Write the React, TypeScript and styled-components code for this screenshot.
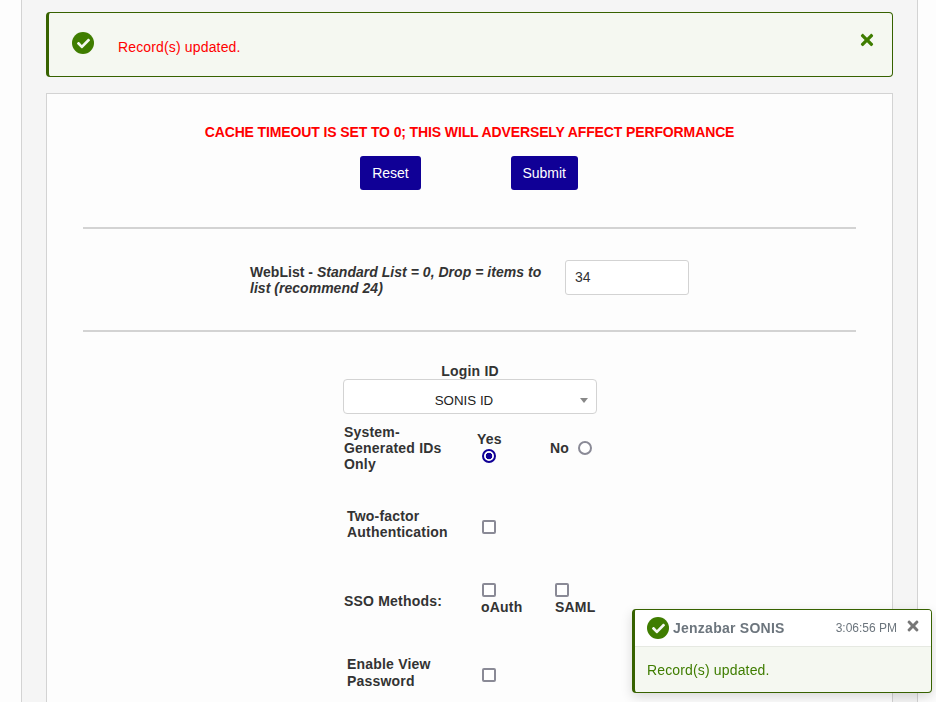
import { FaCheck, FaTimes } from "react-icons/fa"
import styled, { createGlobalStyle } from "styled-components"

const GlobalStyle = createGlobalStyle`
  html, body {
    margin: 0;
    padding: 0;
    height: 702px;
    overflow: hidden;
    background: #fdfdfd;
    font-family: "Liberation Sans", Arial, sans-serif;
    color: #333;
  }
`

const Shell = styled.div`
  box-sizing: border-box;
  width: 897px;
  height: 702px;
  margin-left: 21px;
  padding: 12px 24px 0;
  background: #f5f5f5;
  border-left: 1px solid #d3d3d3;
  border-right: 1px solid #d3d3d3;
  overflow: hidden;
`

const Alert = styled.div`
  box-sizing: border-box;
  display: flex;
  align-items: flex-start;
  height: 65px;
  padding: 19px 19px 0 23px;
  background: #f5f8f1;
  border: 1px solid #376200;
  border-left-width: 3px;
  border-radius: 4px;
`

const AlertText = styled.div`
  margin: 7px 0 0 24px;
  flex: 1;
  font-size: 14px;
  line-height: 16px;
  letter-spacing: 0.15px;
  color: #f00;
`

const CheckBadge = styled.span<{ $size: number }>`
  display: inline-flex;
  flex: none;
  align-items: center;
  justify-content: center;
  width: ${(p) => p.$size}px;
  height: ${(p) => p.$size}px;
  border-radius: 50%;
  background: #3f7d00;
  color: #f5f8f1;
  font-size: ${(p) => Math.round(p.$size * 0.6)}px;
`

const AlertClose = styled.span`
  display: flex;
  margin: -1px -3px 0 0;
  color: #3f7d00;
  font-size: 18px;
`

const Card = styled.div`
  box-sizing: border-box;
  height: 640px;
  margin-top: 16px;
  padding: 30px 36px 0;
  background: #fdfdfd;
  border: 1px solid #d3d3d3;
`

const Warning = styled.div`
  font-size: 14px;
  line-height: 16px;
  font-weight: 700;
  letter-spacing: -0.12px;
  text-align: center;
  color: #f00;
`

const ButtonRow = styled.div`
  display: flex;
  gap: 90px;
  justify-content: center;
  margin: 16px 0 0 -1px;
`

const ActionButton = styled.button`
  box-sizing: border-box;
  height: 34px;
  padding: 0 12px;
  background: #100096;
  border: none;
  border-radius: 3px;
  font-family: inherit;
  font-size: 14px;
  letter-spacing: -0.05px;
  color: #fff;
`

const Divider = styled.hr`
  height: 2px;
  margin: 0;
  background: #d3d3d3;
  border: none;
`

const TopDivider = styled(Divider)`
  margin-top: 37px;
`

const WebListRow = styled.div`
  display: flex;
  align-items: center;
  height: 101px;
  padding-left: 167px;
`

const BoldLabel = styled.div`
  font-size: 14px;
  line-height: 16px;
  font-weight: 700;
  letter-spacing: 0.2px;
  color: #333;
`

const WebListLabel = styled(BoldLabel)`
  width: 315px;
  letter-spacing: 0.03px;
  padding-right: 20px;
  box-sizing: border-box;

  em {
    font-style: italic;
  }
`

const TextInput = styled.input`
  box-sizing: border-box;
  width: 124px;
  height: 35px;
  margin-bottom: 5px;
  padding: 0 9px;
  background: #fff;
  border: 1px solid #d3d3d3;
  border-radius: 3px;
  font-family: inherit;
  font-size: 14px;
  color: #333;
`

const FormColumn = styled.div`
  width: 254px;
  margin-left: 260px;
`

const LoginLabel = styled(BoldLabel)`
  margin-top: 31px;
  text-align: center;
`

const SelectBox = styled.div`
  box-sizing: border-box;
  position: relative;
  height: 35px;
  padding: 13px 12px 0 0;
  background: #fff;
  border: 1px solid #d3d3d3;
  border-radius: 4px;
  font-size: 13.33px;
  line-height: 16px;
  text-align: center;
  color: #222;

  &::after {
    content: "";
    position: absolute;
    right: 8px;
    top: 18px;
    border-left: 4px solid transparent;
    border-right: 4px solid transparent;
    border-top: 5px solid #888;
  }
`

const OptionRow = styled.div<{ $height: number; $top: number }>`
  display: flex;
  align-items: center;
  height: ${(p) => p.$height}px;
  margin-top: ${(p) => p.$top}px;
`

const RowLabel = styled(BoldLabel)<{ $width: number; $indent: number; $leading?: number }>`
  box-sizing: border-box;
  flex: none;
  width: ${(p) => p.$width}px;
  padding-left: ${(p) => p.$indent}px;
  line-height: ${(p) => p.$leading ?? 16}px;
`

const Choice = styled.div<{ $width: number; $lift: number; $gap: number }>`
  display: flex;
  flex-direction: column;
  align-items: flex-start;
  gap: ${(p) => p.$gap}px;
  width: ${(p) => p.$width}px;
  margin-bottom: ${(p) => p.$lift}px;
`

const Box = styled.span<{ $x?: number; $y?: number }>`
  box-sizing: border-box;
  display: block;
  width: 14px;
  height: 14px;
  margin-left: ${(p) => p.$x ?? 0}px;
  margin-top: ${(p) => p.$y ?? 0}px;
  background: #fff;
  border: 2px solid #8a8a96;
  border-radius: 2px;
`

const RadioOff = styled.span`
  box-sizing: border-box;
  display: block;
  width: 14px;
  height: 14px;
  background: #fff;
  border: 2px solid #8a8a96;
  border-radius: 50%;
`

const RadioOn = styled(RadioOff)`
  margin-left: 5px;
  border-color: #100096;
  background: radial-gradient(circle, #100096 0 3px, #fff 3.6px);
`

const NoChoice = styled.div`
  display: flex;
  align-items: center;
  gap: 9px;
`

const Toast = styled.div`
  position: fixed;
  left: 632px;
  top: 609px;
  box-sizing: border-box;
  width: 300px;
  height: 84px;
  background: #f5f8f1;
  border: 1px solid #376200;
  border-left-width: 3px;
  border-radius: 4px;
  box-shadow: 0 4px 12px rgba(0, 0, 0, 0.15);
  overflow: hidden;
`

const ToastHead = styled.div`
  display: flex;
  align-items: center;
  box-sizing: border-box;
  height: 37px;
  padding: 0 13px 0 12px;
  background: #fff;
  border-bottom: 1px solid #e6e9e2;
`

const ToastTitle = styled.span`
  flex: 1;
  margin-left: 4px;
  font-size: 14px;
  font-weight: 700;
  letter-spacing: 0.25px;
  color: #6c757d;
`

const ToastTime = styled.span`
  font-size: 12px;
  color: #6c757d;
  margin-right: 8px;
`

const ToastClose = styled.span`
  display: flex;
  margin: -5px -3px 0 0;
  font-size: 16px;
  color: #777;
`

const ToastBody = styled.div`
  padding: 15px 12px 0;
  font-size: 14px;
  line-height: 16px;
  letter-spacing: 0.15px;
  color: #3f7d00;
`

export default function App() {
  return (
    <>
      <GlobalStyle />
      <Shell>
        <Alert>
          <CheckBadge $size={22}>
            <FaCheck />
          </CheckBadge>
          <AlertText>Record(s) updated.</AlertText>
          <AlertClose>
            <FaTimes />
          </AlertClose>
        </Alert>
        <Card>
          <Warning>CACHE TIMEOUT IS SET TO 0; THIS WILL ADVERSELY AFFECT PERFORMANCE</Warning>
          <ButtonRow>
            <ActionButton type="button">Reset</ActionButton>
            <ActionButton type="button">Submit</ActionButton>
          </ButtonRow>
          <TopDivider />
          <WebListRow>
            <WebListLabel>
              WebList - <em>Standard List = 0, Drop = items to list (recommend 24)</em>
            </WebListLabel>
            <TextInput defaultValue="34" />
          </WebListRow>
          <Divider />
          <FormColumn>
            <LoginLabel>Login ID</LoginLabel>
            <SelectBox>SONIS ID</SelectBox>
            <OptionRow $height={48} $top={10}>
              <RowLabel $width={134} $indent={1}>
                System-
                <br />
                Generated IDs
                <br />
                Only
              </RowLabel>
              <Choice $width={73} $lift={2} $gap={2}>
                <BoldLabel>Yes</BoldLabel>
                <RadioOn />
              </Choice>
              <NoChoice>
                <BoldLabel>No</BoldLabel>
                <RadioOff />
              </NoChoice>
            </OptionRow>
            <OptionRow $height={32} $top={36}>
              <RowLabel $width={139} $indent={4}>
                Two-factor
                <br />
                Authentication
              </RowLabel>
              <Box $y={6} />
            </OptionRow>
            <OptionRow $height={34} $top={44}>
              <RowLabel $width={138} $indent={1}>
                SSO Methods:
              </RowLabel>
              <Choice $width={74} $lift={4} $gap={2}>
                <Box $x={1} />
                <BoldLabel>oAuth</BoldLabel>
              </Choice>
              <Choice $width={42} $lift={4} $gap={2}>
                <Box />
                <BoldLabel>SAML</BoldLabel>
              </Choice>
            </OptionRow>
            <OptionRow $height={34} $top={38}>
              <RowLabel $width={139} $indent={4} $leading={17}>
                Enable View
                <br />
                Password
              </RowLabel>
              <Box $y={4} />
            </OptionRow>
          </FormColumn>
        </Card>
      </Shell>
      <Toast>
        <ToastHead>
          <CheckBadge $size={22}>
            <FaCheck />
          </CheckBadge>
          <ToastTitle>Jenzabar SONIS</ToastTitle>
          <ToastTime>3:06:56 PM</ToastTime>
          <ToastClose>
            <FaTimes />
          </ToastClose>
        </ToastHead>
        <ToastBody>Record(s) updated.</ToastBody>
      </Toast>
    </>
  )
}
